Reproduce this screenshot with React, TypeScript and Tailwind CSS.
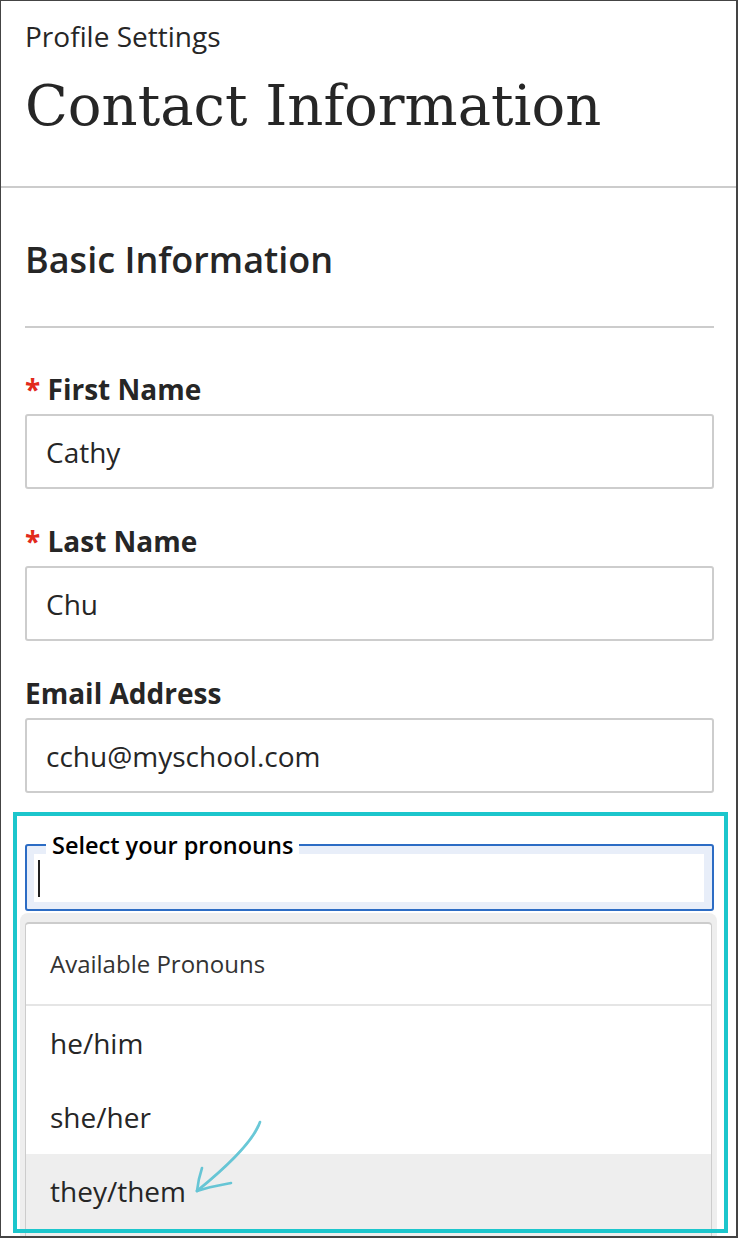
const fields = [
  { label: "First Name", value: "Cathy", required: true },
  { label: "Last Name", value: "Chu", required: true },
  { label: "Email Address", value: "cchu@myschool.com", required: false },
];

const pronouns = ["he/him", "she/her", "they/them"];

export default function App() {
  return (
    <div className="relative h-[1238px] w-[738px] overflow-hidden border-t border-b-2 border-l border-r-2 border-[#444] bg-white font-['Open_Sans',sans-serif] text-[#262626]">
      <header className="h-[187px] border-b-2 border-[#cccccc] pl-[24px] pr-[22px] pt-[17px]">
        <p className="text-[28px] leading-[36px]">Profile Settings</p>
        <h1 className="mt-[16px] font-['DejaVu_Serif',serif] text-[56px] leading-[72px]">
          Contact Information
        </h1>
      </header>

      <main className="pl-[24px] pr-[22px]">
        <h2 className="mt-[48px] border-b-2 border-[#cccccc] pb-[42px] text-[36px] font-semibold leading-[48px]">
          Basic Information
        </h2>

        <div className="mt-[43px] flex flex-col gap-[34px]">
          {fields.map((f) => (
            <div key={f.label} className="flex flex-col">
              <label className="mb-[7px] text-[28px] font-bold leading-[36px]">
                {f.required && <span className="text-[#e22a1b]">* </span>}
                {f.label}
              </label>
              <input
                readOnly
                value={f.value}
                className="h-[75px] w-full rounded-[3px] border-2 border-[#cdcdcd] bg-white pl-[19px] text-[28px] text-[#262626] outline-none"
              />
            </div>
          ))}
        </div>

        <fieldset className="mt-[43px] rounded-[3px] border-2 border-[#2c6cc4] bg-[#e8eef9] pb-[7px] pl-[7px] pr-[8px] pt-0">
          <legend className="ml-[12px] bg-white px-[6px] text-[23.5px] font-semibold leading-[18px] text-black">
            Select your pronouns
          </legend>
          <div className="h-[48px] bg-white pl-[4px] pt-[6px]">
            <div className="h-[37px] w-[2px] bg-[#222]" />
          </div>
        </fieldset>

        <div className="-ml-[5px] -mr-[3px] mt-[2px] rounded-t-[8px] bg-[#eeeeee] px-[5px] pt-[9px]">
          <ul className="rounded-t-[4px] border-x border-t-2 border-[#cccccc] bg-white">
            <li className="flex h-[82px] items-center border-b-2 border-[#e5e5e5] pl-[24px] text-[24px] text-[#333]">
              Available Pronouns
            </li>
            {pronouns.map((p, i) => (
              <li
                key={p}
                className={
                  i === pronouns.length - 1
                    ? "flex h-[82px] items-start bg-[#eeeeee] pl-[24px] pt-[19px] text-[28px] leading-[36px]"
                    : "flex h-[74px] items-center pl-[24px] text-[28px]"
                }
              >
                {p}
              </li>
            ))}
          </ul>
        </div>
      </main>

      {/* annotation overlay */}
      <div className="pointer-events-none absolute left-[12px] top-[811px] h-[421px] w-[715px] border-4 border-[#1cc6cc]" />
      <svg
        className="pointer-events-none absolute left-[181px] top-[1109px]"
        width="90"
        height="90"
        viewBox="0 0 90 90"
        fill="none"
      >
        <g stroke="#4fbfd1" strokeWidth="2.6" strokeLinecap="round" opacity="0.85">
          <path d="M78 12 C72 30, 48 54, 15 81" />
          <path d="M76 16 C69 32, 47 55, 17 79" opacity="0.5" />
          <path d="M15 81 C16 72, 18 64, 20 58" />
          <path d="M15 81 C26 77, 38 75, 49 73" />
        </g>
      </svg>
    </div>
  );
}
